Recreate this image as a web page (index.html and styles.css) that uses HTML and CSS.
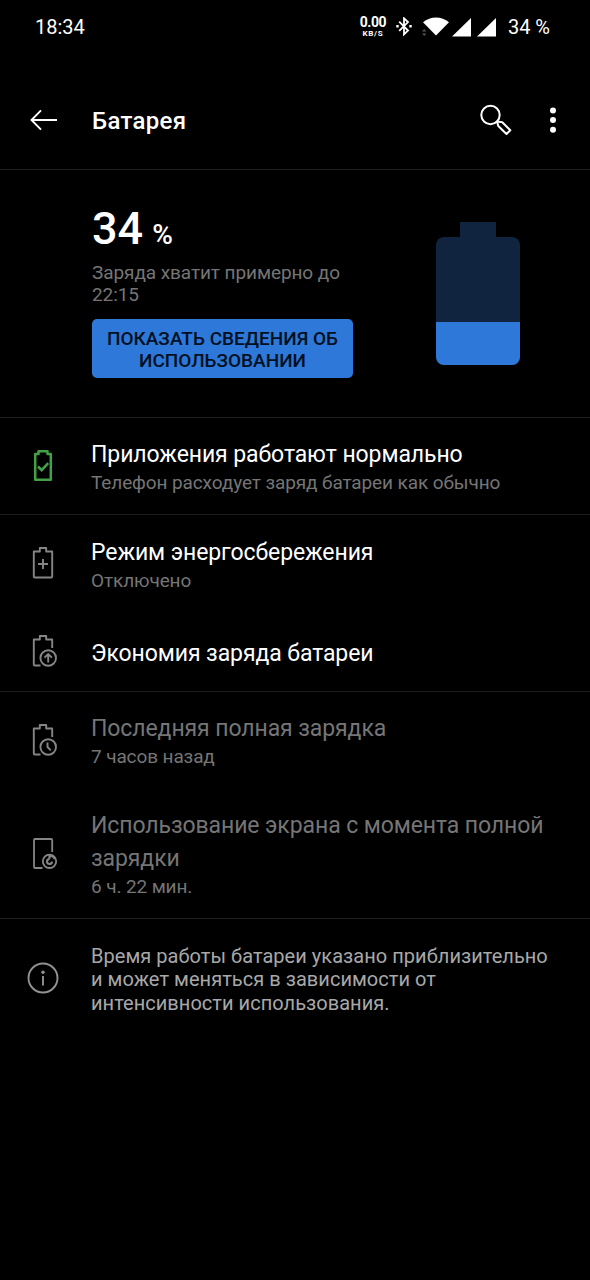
FILE: index.html
```html
<!DOCTYPE html>
<html lang="ru">
<head>
<meta charset="utf-8">
<title>Батарея</title>
<link rel="stylesheet" href="styles.css">
</head>
<body>
<header class="status">
  <span class="clock">18:34</span>
  <div class="speed"><b>0.00</b><span>KB/S</span></div>
  <svg class="bt" width="16" height="20" viewBox="0 0 16 20" fill="none" stroke="#fff" stroke-width="1.8"><path d="M3.2 4.700 12 13.500 8 17.300V1.300l4 3.800-8.800 8.800"/><path d="M.3 9.300h2.400M13.300 9.300h2.400" stroke-width="2.400"/></svg>
  <svg class="wifi" width="27" height="20" viewBox="0 0 27 20"><path fill="#fff" d="M1 5.200C8.500-1.200 19.500-1.200 27 5.200L14 18.500Z"/><path fill="#555" d="M0 14.500 2.200 12l2.200 2.500zM0 16.500l2.200 2.500 2.200-2.500z"/></svg>
  <svg class="sig" width="19" height="19" viewBox="0 0 19 19"><path fill="#fff" d="M0 18.500 19 0v18.500z"/></svg>
  <svg class="sig2" width="19" height="19" viewBox="0 0 19 19"><path fill="#fff" d="M0 18.500 19 0v18.500z"/></svg>
  <span class="percent">34 %</span>
</header>
<nav class="appbar">
  <svg class="back" width="28" height="22" viewBox="0 0 28 22" fill="none" stroke="#fff" stroke-width="1.900"><path d="M27 11H1.500M11 1.300 1.500 11 11 20.700"/></svg>
  <h1 class="heading">Батарея</h1>
  <svg class="search" width="32" height="32" viewBox="0 0 32 32" fill="none" stroke="#fff" stroke-width="2"><circle cx="10.500" cy="11" r="9.200"/><path d="M17 17.500 18.300 22 26.500 30 30.300 26.300 22.300 18.200Z" stroke-linejoin="round"/></svg>
  <svg class="more" width="8" height="26" viewBox="0 0 8 26" fill="#fff"><circle cx="4" cy="3.500" r="3"/><circle cx="4" cy="13" r="3"/><circle cx="4" cy="22.700" r="3"/></svg>
</nav>
<section class="summary">
  <div class="info">
    <div class="level"><span>34</span><small>%</small></div>
    <p class="estimate">Заряда хватит примерно до<br>22:15</p>
    <button class="details">ПОКАЗАТЬ СВЕДЕНИЯ ОБ<br>ИСПОЛЬЗОВАНИИ</button>
  </div>
  <div class="battery"><div class="cap"></div><div class="cell"><div class="charge"></div></div></div>
</section>
<section class="group">
  <div class="row normal">
    <svg class="icon" width="32" height="36" viewBox="0 0 32 36" fill="none" stroke="#43a047" stroke-width="2.500"><path d="M11.500 6V3.200h9V6h3.300v25.800H8.200V6z" stroke-linejoin="round"/><path d="m11 18.500 3.700 3.700 6.500-7"/></svg>
    <div class="text"><div class="title">Приложения работают нормально</div><div class="sub">Телефон расходует заряд батареи как обычно</div></div>
  </div>
</section>
<section class="group">
  <div class="row saver">
    <svg class="icon" width="32" height="36" viewBox="0 0 32 36" fill="none" stroke="#858585" stroke-width="1.900"><path d="M12.800 6.500V3h6.400v3.500h6v25q0 1-1 1H7.800q-1 0-1-1v-25z" stroke-linejoin="round"/><path d="M16 14v10M11 19h10"/></svg>
    <div class="text"><div class="title">Режим энергосбережения</div><div class="sub">Отключено</div></div>
  </div>
  <div class="row optimize">
    <svg class="icon" width="32" height="36" viewBox="0 0 32 36" fill="none" stroke="#858585" stroke-width="1.900"><path d="M13.500 32.500H7.800q-1 0-1-1v-25h6V3h6.400v3.500h6v8.500" stroke-linejoin="round"/><circle cx="21.200" cy="25" r="7.800"/><path d="M21.200 29.500V21M17.500 24.700l3.700-3.700 3.700 3.700"/></svg>
    <div class="text"><div class="title">Экономия заряда батареи</div></div>
  </div>
</section>
<section class="group">
  <div class="row last">
    <svg class="icon" width="32" height="36" viewBox="0 0 32 36" fill="none" stroke="#858585" stroke-width="1.900"><path d="M13.500 32.500H7.800q-1 0-1-1v-25h6V3h6.400v3.500h6v8.500" stroke-linejoin="round"/><circle cx="21.200" cy="25" r="7.800"/><path d="M20.500 20.500V25l3.300 3.300"/></svg>
    <div class="text"><div class="title dim">Последняя полная зарядка</div><div class="sub">7 часов назад</div></div>
  </div>
  <div class="row screen">
    <svg class="icon" width="32" height="36" viewBox="0 0 32 36" fill="none" stroke="#858585" stroke-width="1.800"><path d="M15.500 33H8q-1 0-1-1V5q0-1 1-1h16.200q1 0 1 1v12" stroke-linejoin="round"/><circle cx="22.500" cy="26.300" r="6.700"/><path stroke-width="2.200" d="M22.500 19.800v4M22.700 24a2.500 2.500 0 1 0 2.300 2.600M23 20.500q3.500.6 5 3.500"/></svg>
    <div class="text"><div class="title dim">Использование экрана с момента полной<br>зарядки</div><div class="sub">6 ч. 22 мин.</div></div>
  </div>
</section>
<section class="row note">
  <svg class="icon" width="32" height="32" viewBox="0 0 32 32" fill="none" stroke="#929292" stroke-width="1.900"><circle cx="16" cy="16" r="14.500"/><path d="M16 14v9.500"/><circle cx="16" cy="10.300" r="1.700" fill="#929292" stroke="none"/></svg>
  <p class="text">Время работы батареи указано приблизительно<br>и может меняться в зависимости от<br>интенсивности использования.</p>
</section>
</body>
</html>
```
FILE: styles.css
```css
* { box-sizing: border-box; }
body { margin: 0; height: 1280px; background: #000; color: #fff; font-family: Roboto, "Noto Sans", sans-serif; overflow: hidden; white-space: nowrap; }
svg { display: block; flex: none; }
h1, p { margin: 0; }
.status { display: flex; height: 54px; padding: 0 40px 0 35px; align-items: center; }
.clock, .percent { font-size: 20px; line-height: 24px; }
.clock { margin-right: auto; }
.speed { display: flex; flex-direction: column; align-items: center; width: 26px; margin-right: 10px; }
.speed b { font-size: 14px; font-weight: 700; line-height: 13px; letter-spacing: -0.5px; }
.speed span { font-size: 8px; font-weight: 700; line-height: 10px; letter-spacing: 0.7px; }
.bt { margin-right: 10px; }
.wifi { margin-right: 3px; }
.sig { margin-right: 6px; }
.sig2 { margin-right: 12px; }
.appbar { display: flex; align-items: center; height: 116px; padding: 16px 33px 0 30px; border-bottom: 1px solid #1c1c1c; }
.heading { flex: 1; margin-left: 34px; font-size: 24px; font-weight: 500; line-height: 30px; letter-spacing: 0.3px; padding-top: 3px; }
.search { margin-right: 37px; }
.summary { display: flex; justify-content: space-between; height: 248px; padding: 37px 70px 0 92px; border-bottom: 1px solid #1c1c1c; }
.level { display: flex; align-items: baseline; gap: 9px; height: 44px; font-size: 45px; font-weight: 500; line-height: 44px; }
.level small { font-size: 28px; line-height: 30px; }
.estimate { margin-top: 11px; font-size: 19px; line-height: 22px; letter-spacing: -0.08px; color: #757575; }
.details { display: block; width: 261px; height: 59px; margin-top: 13px; padding: 2px 0 0; border: 0; border-radius: 5px; background: #2d78d8; color: #03101f; font: 500 19px/22px Roboto, sans-serif; }
.battery { width: 84px; padding-top: 15px; }
.cap { width: 36px; height: 15px; margin: 0 auto; background: #10243f; }
.cell { display: flex; align-items: flex-end; height: 128px; border-radius: 8px; background: #10243f; overflow: hidden; }
.charge { width: 100%; height: 43px; background: #2d78d8; }
.group { border-bottom: 1px solid #1c1c1c; }
.row { display: flex; align-items: flex-start; padding-left: 27px; }
.row .text { margin-left: 32px; }
.title { font-size: 23px; line-height: 33px; letter-spacing: -0.09px; }
.dim { color: #757575; }
.sub { margin-top: 1px; font-size: 19px; line-height: 22px; letter-spacing: -0.11px; color: #757575; }
.normal { height: 96px; padding-top: 20px; }
.normal .icon { margin-top: 10px; }
.saver { height: 101px; padding-top: 21px; }
.saver .icon { margin-top: 9px; }
.optimize { height: 75px; padding-top: 21px; }
.optimize .icon { margin-top: -4px; }
.last { height: 97px; padding-top: 20px; }
.last .icon { margin-top: 10px; }
.screen { height: 129px; padding-top: 20px; }
.screen .icon { margin-top: 26px; }
.note { padding-top: 26px; font-size: 20px; line-height: 23.3px; letter-spacing: 0.04px; color: #a8a8a8; }
.note .icon { margin-top: 17px; }
```
